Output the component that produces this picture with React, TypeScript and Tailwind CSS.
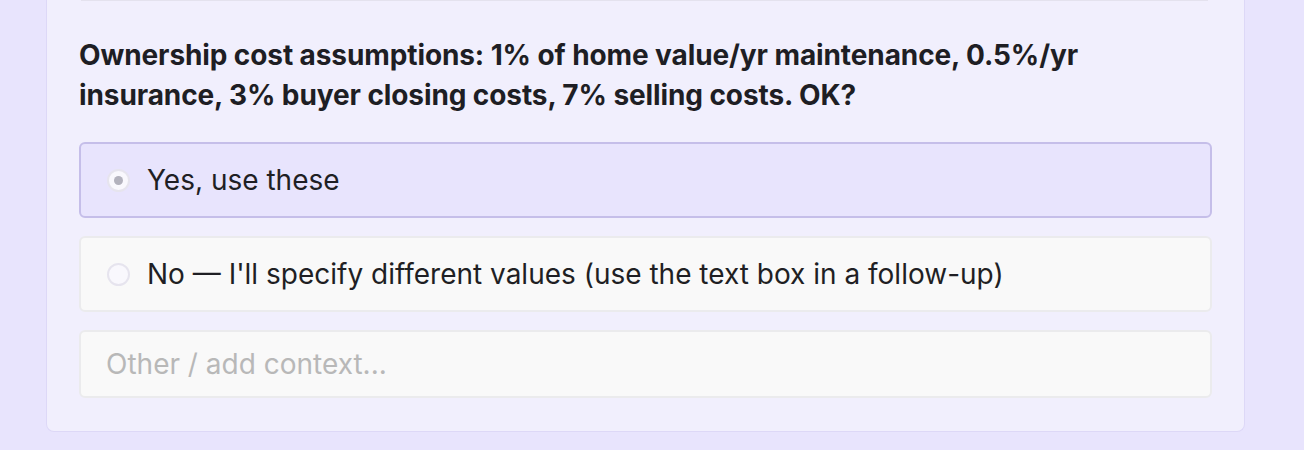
import { useState } from 'react'

const options = [
  'Yes, use these',
  "No — I'll specify different values (use the text box in a follow-up)",
]

function App() {
  const [selected, setSelected] = useState<number>(0)
  const [other, setOther] = useState<string>('')

  return (
    <div className="min-h-screen bg-[#e8e4fd] pl-[46px] pr-[59px] font-['Inter',sans-serif]">
      <div className="flex flex-col border-x border-b border-[#ddd8f7] bg-[#f1effd] rounded-b-lg px-8 pb-[33px]">
        <div className="h-px mx-[2px] mr-[4px] bg-[#e4e2ee]"></div>

        <h3 className="mt-[34px] text-[28px] leading-[40px] font-bold text-[#1e1e24] tracking-[-0.1px]">
          Ownership cost assumptions: 1% of home value/yr maintenance, 0.5%/yr insurance, 3% buyer closing costs, 7% selling costs. OK?
        </h3>

        <div className="flex flex-col gap-[18px] mt-[27px]">
          {options.map((opt, i) => (
            <label
              key={i}
              onClick={() => setSelected(i)}
              className={
                selected === i
                  ? 'flex items-center h-[76px] pl-[26px] gap-[17px] rounded-md border-2 border-[#c5bee9] bg-[#e8e4fd] cursor-pointer'
                  : 'flex items-center h-[76px] pl-[26px] gap-[17px] rounded-md border-2 border-[#ebebed] bg-[#f9f9f9] cursor-pointer'
              }
            >
              <span className="flex items-center justify-center w-[23px] h-[23px] rounded-full border-2 border-[#e6e4ee] bg-[#f9f8fd]">
                {selected === i && <span className="w-[9px] h-[9px] rounded-full bg-[#b3b2bd]"></span>}
              </span>
              <span className="text-[28px] text-[#1f1f24]">{opt}</span>
            </label>
          ))}

          <input
            type="text"
            placeholder="Other / add context..."
            value={other}
            onChange={(e) => setOther(e.target.value)}
            className="h-[68px] pl-[25px] rounded-md border-2 border-[#ebebed] bg-[#f9f9f9] text-[28px] text-[#1f1f24] placeholder:text-[#b8b8b8] outline-none"
          />
        </div>
      </div>
    </div>
  )
}

export default App
